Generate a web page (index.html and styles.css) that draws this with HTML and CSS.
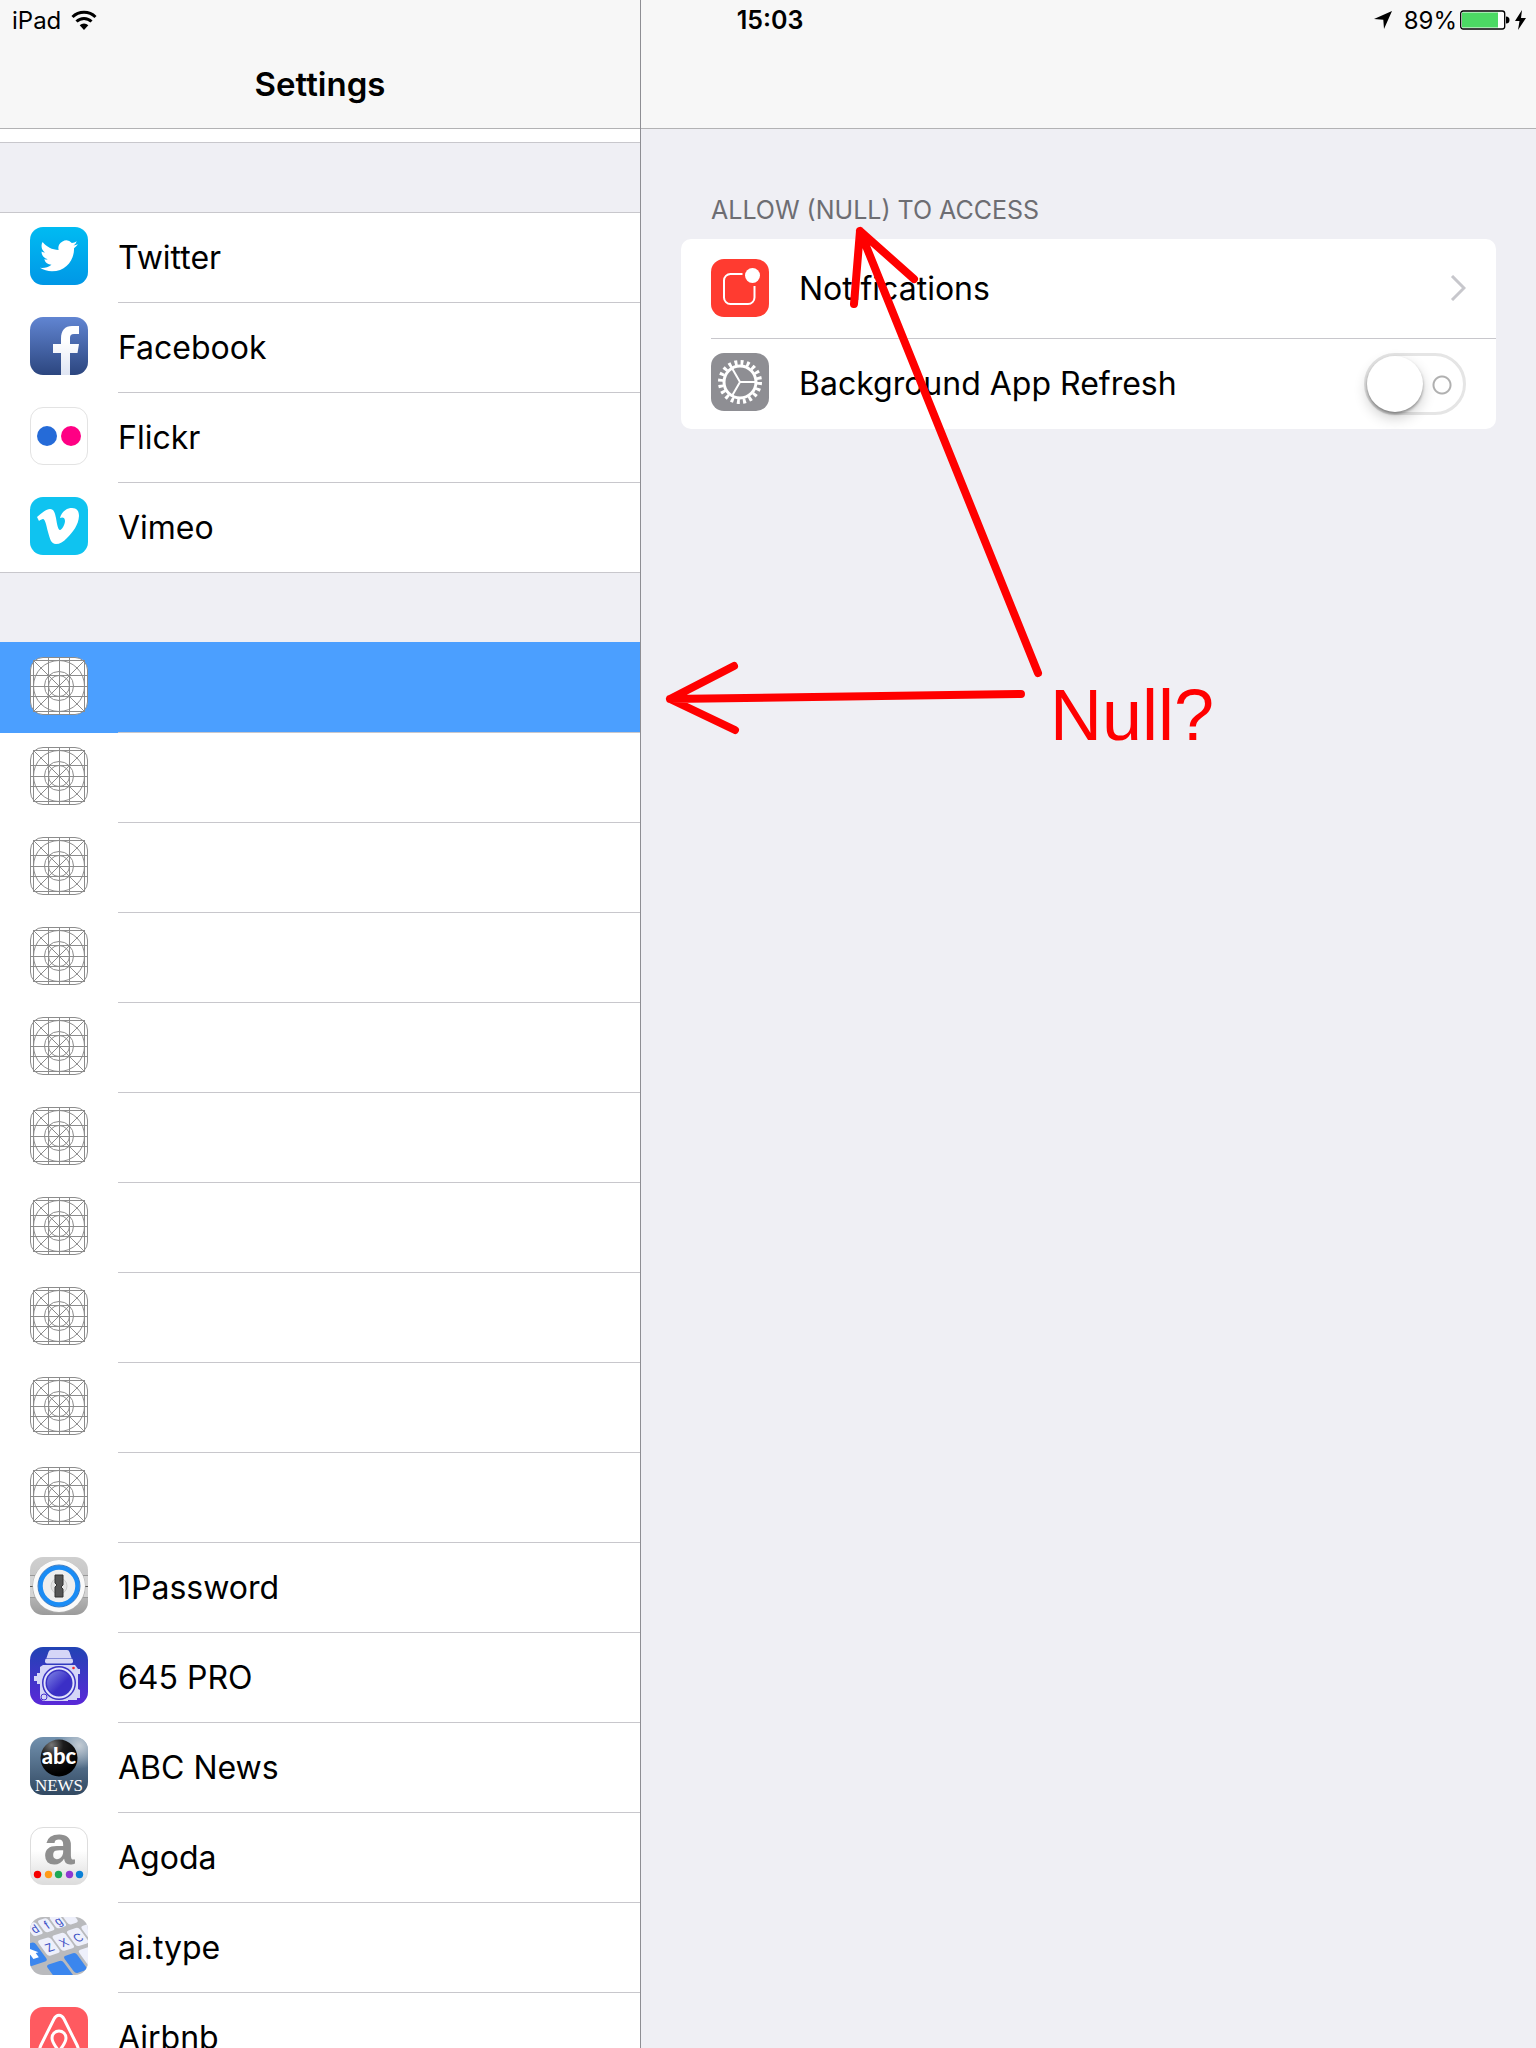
FILE: index.html
```html
<!DOCTYPE html>
<html lang="en">

<head>
    <meta charset="utf-8">
    <title>Settings</title>
    <link rel="stylesheet" href="styles.css">
</head>

<body>
    <!-- shared drawing: the blank app icon grid -->
    <svg class="defs" width="0" height="0">
        <symbol id="blank" viewBox="0 0 58 58">
            <rect x="0.5" y="0.5" width="57" height="57" rx="12.5" fill="#fff" stroke="#8c8c8c" />
            <g fill="none" stroke="#8c8c8c">
                <path d="M3.5 3v52M18.500 1v56M29.500 1v56M39.500 1v56M54.500 3v52" />
                <path d="M3 3.500h52M1 18.500h56M1 29.500h56M1 39.500h56M3 54.500h52" />
                <path d="M4 4l50 50M54 4L4 54" />
                <circle cx="29" cy="29" r="25.500" />
                <circle cx="29" cy="29" r="14.500" />
                <circle cx="29" cy="29" r="10.500" />
            </g>
        </symbol>
    </svg>

    <div class="statusbar">
        <div class="carrier">
            <span>iPad</span>
            <svg width="26" height="22" viewBox="0 0 26 22">
                <path d="M1.500 8a16.500 16.500 0 0 1 23 0" fill="none" stroke="#000" stroke-width="3" />
                <path d="M5.500 12.500a10.700 10.700 0 0 1 15 0" fill="none" stroke="#000" stroke-width="3" />
                <path d="M8.700 16.200a6.200 6.200 0 0 1 8.600 0L13 21z" />
            </svg>
        </div>
        <div class="time">15:03</div>
        <div class="power">
            <svg class="location" width="18" height="18" viewBox="0 0 18 18">
                <path d="M18 0L10 18 9.300 8.700 0 8z" />
            </svg>
            <span>89%</span>
            <svg width="66" height="20" viewBox="0 0 66 20">
                <rect x="0.700" y="1" width="44" height="18" rx="2.500" fill="#fff" stroke="#000" stroke-width="1.300" />
                <rect x="2" y="2.500" width="36" height="15" fill="#4cd964" />
                <path d="M46 6.500a3.500 3.500 0 0 1 0 7z" />
                <path d="M62 0L55 11h4.500L58 20l8-12h-5z" />
            </svg>
        </div>
    </div>

    <div class="page">
        <div class="sidebar">
            <div class="navbar">
                <h1>Settings</h1>
            </div>
            <div class="list scrolled"></div>

            <ul class="list">
                <li>
                    <svg class="icon" viewBox="0 0 58 58">
                        <defs>
                            <linearGradient id="tw" x2="0" y2="1">
                                <stop offset="0" stop-color="#00bbf2" />
                                <stop offset="1" stop-color="#0097e6" />
                            </linearGradient>
                        </defs>
                        <rect width="58" height="58" rx="13" fill="url(#tw)" />
                        <path transform="translate(10 10) scale(1.58)" fill="#fff" d="M23.950 4.570a10 10 0 0 1-2.820.77 4.960 4.960 0 0 0 2.160-2.720c-.95.55-2 .96-3.130 1.180a4.920 4.920 0 0 0-8.380 4.480C7.690 8.100 4.070 6.130 1.640 3.160a4.820 4.820 0 0 0-.67 2.480c0 1.710.87 3.210 2.190 4.100a4.900 4.900 0 0 1-2.230-.62v.06a4.920 4.920 0 0 0 3.950 4.830 5 5 0 0 1-2.210.08 4.940 4.940 0 0 0 4.600 3.420A9.870 9.870 0 0 1 0 19.540a13.990 13.990 0 0 0 7.560 2.210c9.050 0 13.990-7.500 13.990-13.980 0-.21 0-.42-.02-.63a9.940 9.940 0 0 0 2.460-2.550z" />
                    </svg>
                    <span>Twitter</span>
                </li>
                <li>
                    <svg class="icon" viewBox="0 0 58 58">
                        <defs>
                            <linearGradient id="fb" x2="0" y2="1">
                                <stop offset="0" stop-color="#6185d2" />
                                <stop offset="1" stop-color="#2c467f" />
                            </linearGradient>
                            <linearGradient id="fbf" x2="0" y2="1">
                                <stop offset="0.300" stop-color="#fff" />
                                <stop offset="1" stop-color="#dfe5f3" />
                            </linearGradient>
                        </defs>
                        <rect width="58" height="58" rx="13" fill="url(#fb)" />
                        <path d="M31 58V36h-8v-9h8v-5c0-9 4-13 11-13h7v8h-5c-3 0-4 1.500-4 4v6h9l-1.500 9H40v22z" fill="url(#fbf)" />
                    </svg>
                    <span>Facebook</span>
                </li>
                <li>
                    <svg class="icon" viewBox="0 0 58 58">
                        <rect x="0.500" y="0.500" width="57" height="57" rx="12.500" fill="#fff" stroke="#e3e3e3" />
                        <circle cx="17" cy="29" r="10" fill="#256bd8" />
                        <circle cx="41" cy="29" r="10" fill="#ff0084" />
                    </svg>
                    <span>Flickr</span>
                </li>
                <li>
                    <svg class="icon" viewBox="0 0 58 58">
                        <rect width="58" height="58" rx="13" fill="#0fc3f0" />
                        <path d="M7 20c5-4 9-8 13-8 4 0 5 4 6 9 1 6 2 12 4 12s5-6 5-9c0-4-3-4-5-3 2-7 7-10 12-10 5 0 7 3 7 8-.5 9-6 16-12 22-4 4-7 6-11 6-5 0-6-5-8-12-2-8-3-13-5-13-1 0-3 1-4 2z" fill="#fff" />
                    </svg>
                    <span>Vimeo</span>
                </li>
            </ul>

            <ul class="list">
                <li class="selected"><svg class="icon"><use href="#blank" /></svg></li>
                <li><svg class="icon"><use href="#blank" /></svg></li>
                <li><svg class="icon"><use href="#blank" /></svg></li>
                <li><svg class="icon"><use href="#blank" /></svg></li>
                <li><svg class="icon"><use href="#blank" /></svg></li>
                <li><svg class="icon"><use href="#blank" /></svg></li>
                <li><svg class="icon"><use href="#blank" /></svg></li>
                <li><svg class="icon"><use href="#blank" /></svg></li>
                <li><svg class="icon"><use href="#blank" /></svg></li>
                <li><svg class="icon"><use href="#blank" /></svg></li>
                <li>
                    <svg class="icon" viewBox="0 0 58 58">
                        <defs>
                            <linearGradient id="op" x2="0" y2="1">
                                <stop offset="0" stop-color="#cfcfcf" />
                                <stop offset="0.500" stop-color="#c4c4c4" />
                                <stop offset="1" stop-color="#9b9b9b" />
                            </linearGradient>
                        </defs>
                        <rect width="58" height="58" rx="13" fill="url(#op)" />
                        <rect y="18" width="58" height="23" fill="#d4d4d4" />
                        <path d="M0 18.500h58M0 40.500h58" stroke="#999" />
                        <path d="M0 29.500h58" stroke="#555" />
                        <circle cx="29" cy="29.500" r="26.500" fill="#aaa" />
                        <circle cx="29" cy="29" r="26" fill="#fafafa" />
                        <circle cx="29" cy="29" r="18.500" fill="#eee" stroke="#1a8cf5" stroke-width="4.500" />
                        <circle cx="29" cy="29" r="21" fill="none" stroke="#1560b4" stroke-width="0.800" />
                        <circle cx="29" cy="29" r="8" fill="#e4e4e4" stroke="#ccc" />
                        <path d="M25 18h8v10l-2 2 2 2v8h-8V30l2-2-2-2z" fill="#555" stroke="#333" />
                    </svg>
                    <span>1Password</span>
                </li>
                <li>
                    <svg class="icon" viewBox="0 0 58 58">
                        <defs>
                            <linearGradient id="pro" x2="0" y2="1">
                                <stop offset="0" stop-color="#2143b4" />
                                <stop offset="1" stop-color="#5a28d8" />
                            </linearGradient>
                            <linearGradient id="lens" x2="1" y2="1">
                                <stop offset="0.100" stop-color="#7477e0" />
                                <stop offset="0.600" stop-color="#3b2fc6" />
                            </linearGradient>
                        </defs>
                        <rect width="58" height="58" rx="13" fill="url(#pro)" />
                        <g fill="#d5d6f7">
                            <path d="M21 3h16q2 0 2.500 2l2 6h-25l2-6q.5-2 2.500-2z" />
                            <rect x="15" y="11.500" width="28" height="5" rx="2" />
                            <path d="M13 18h32l3 4h2v5h-2v15l2 1v8h-3v2H38v1H13l-3-3V37H7v-3H4v-5h3v-3h3v-6z" />
                        </g>
                        <circle cx="29" cy="36" r="17" fill="#3a32c3" />
                        <circle cx="29" cy="36" r="14.500" fill="#3a32c3" stroke="#e1e2fb" stroke-width="2" />
                        <circle cx="29" cy="36" r="12" fill="url(#lens)" />
                        <circle cx="14" cy="50" r="3" fill="none" stroke="#4a33cd" />
                        <circle cx="43.500" cy="21" r="1.300" fill="#f02828" />
                    </svg>
                    <span>645 PRO</span>
                </li>
                <li>
                    <svg class="icon" viewBox="0 0 58 58">
                        <defs>
                            <linearGradient id="abc" x2="0" y2="1">
                                <stop offset="0" stop-color="#7291ae" />
                                <stop offset="1" stop-color="#314861" />
                            </linearGradient>
                            <radialGradient id="glow" cx="0.850" cy="0.150" r="0.400">
                                <stop offset="0" stop-color="#c4ccd4" />
                                <stop offset="1" stop-color="#c4ccd4" stop-opacity="0" />
                            </radialGradient>
                            <radialGradient id="ball" cx="0.300" cy="0.150" r="0.800">
                                <stop offset="0" stop-color="#777" />
                                <stop offset="0.400" stop-color="#1c1c1c" />
                                <stop offset="1" stop-color="#000" />
                            </radialGradient>
                        </defs>
                        <rect width="58" height="58" rx="13" fill="url(#abc)" />
                        <rect width="58" height="58" rx="13" fill="url(#glow)" />
                        <circle cx="29" cy="21" r="18.500" fill="url(#ball)" />
                        <text class="abc" x="29" y="27" text-anchor="middle">abc</text>
                        <text class="news" x="29" y="54" text-anchor="middle">NEWS</text>
                    </svg>
                    <span>ABC News</span>
                </li>
                <li>
                    <svg class="icon" viewBox="0 0 58 58">
                        <defs>
                            <linearGradient id="ag" x2="0" y2="1">
                                <stop offset="0.400" stop-color="#fff" />
                                <stop offset="1" stop-color="#dcdcdc" />
                            </linearGradient>
                        </defs>
                        <rect x="0.500" y="0.500" width="57" height="57" rx="12.500" fill="url(#ag)" stroke="#ddd" />
                        <text class="agoda" x="29" y="37" text-anchor="middle">a</text>
                        <circle cx="7.500" cy="47.500" r="3.700" fill="#f50000" />
                        <circle cx="18.500" cy="47.500" r="3.700" fill="#ff9b17" />
                        <circle cx="28.500" cy="47.500" r="3.700" fill="#1ba956" />
                        <circle cx="39.500" cy="47.500" r="3.700" fill="#8f38d2" />
                        <circle cx="49.500" cy="47.500" r="3.700" fill="#0a80d6" />
                    </svg>
                    <span>Agoda</span>
                </li>
                <li>
                    <svg class="icon" viewBox="0 0 58 58">
                        <defs>
                            <clipPath id="round">
                                <rect width="58" height="58" rx="13" />
                            </clipPath>
                        </defs>
                        <g clip-path="url(#round)">
                            <rect width="58" height="58" fill="#b9babd" />
                            <g transform="matrix(0.900 -0.300 0.620 0.850 7 24)">
                                <g fill="#eef0fb">
                                    <rect x="-14" y="-19" width="11" height="14" rx="3" />
                                    <rect x="0" y="-19" width="11" height="14" rx="3" />
                                    <rect x="13" y="-19" width="11" height="14" rx="3" />
                                    <rect x="26" y="-19" width="11" height="14" rx="3" />
                                    <rect x="39" y="-19" width="11" height="14" rx="3" />
                                    <rect x="0" y="0" width="14" height="18" rx="3" />
                                    <rect x="16" y="0" width="14" height="18" rx="3" />
                                    <rect x="32" y="0" width="14" height="18" rx="3" />
                                    <rect x="48" y="0" width="14" height="18" rx="3" />
                                    <rect x="30" y="22" width="20" height="20" rx="3" />
                                </g>
                                <g fill="#3b86ee">
                                    <rect x="-24" y="0" width="21" height="22" rx="3" />
                                    <rect x="-8" y="26" width="18" height="20" rx="3" />
                                    <rect x="13" y="23" width="14" height="20" rx="3" />
                                </g>
                                <path d="M-18 11l6-6 6 6h-3v5h-6v-5z" fill="#fff" />
                            </g>
                        </g>
                        <g class="keys" transform="matrix(0.900 -0.300 0.620 0.850 7 24)">
                            <text x="6" y="-8" text-anchor="middle">d</text>
                            <text x="19" y="-8" text-anchor="middle">f</text>
                            <text x="32" y="-8" text-anchor="middle">g</text>
                            <text x="7" y="14" text-anchor="middle">Z</text>
                            <text x="23" y="14" text-anchor="middle">X</text>
                            <text x="39" y="14" text-anchor="middle">C</text>
                        </g>
                    </svg>
                    <span>ai.type</span>
                </li>
                <li>
                    <svg class="icon" viewBox="0 0 58 58">
                        <rect width="58" height="58" rx="13" fill="#ff5a60" />
                        <path d="M29 44c-5-6-7-9-7-13a7 7 0 0 1 14 0c0 4-2 7-7 13zm0 0c-6 7-12 8-16 5-4-3-4-7-2-11L24 12c2.500-5 7.500-5 10 0l13 26c2 4 2 8-2 11-4 3-10 2-16-5z" fill="none" stroke="#fff" stroke-width="3" />
                    </svg>
                    <span>Airbnb</span>
                </li>
            </ul>
        </div>

        <div class="detail">
            <div class="navbar"></div>
            <div class="content">
                <h2>ALLOW (NULL) TO ACCESS</h2>
                <div class="card">
                    <a class="row tall" href="#">
                        <svg class="icon" viewBox="0 0 58 58">
                            <rect width="58" height="58" rx="13" fill="#ff3b30" />
                            <path d="M31.500 15H19.500a6.500 6.500 0 0 0-6.500 6.500v17a6.500 6.500 0 0 0 6.500 6.500h17.500a6.500 6.500 0 0 0 6.500-6.500V27" fill="none" stroke="#fff" stroke-width="2" />
                            <circle cx="41.500" cy="16.500" r="7.500" fill="#fff" />
                        </svg>
                        <span>Notifications</span>
                        <svg class="chevron" width="16" height="26" viewBox="0 0 16 26">
                            <path d="M2 1l12 12L2 25" fill="none" stroke="#c7c7cc" stroke-width="3" />
                        </svg>
                    </a>
                    <div class="row">
                        <svg class="icon" viewBox="0 0 58 58">
                            <rect width="58" height="58" rx="13" fill="#8e8e93" />
                            <circle cx="29" cy="29" r="19.500" fill="none" stroke="#fff" stroke-width="5" stroke-dasharray="2.900 3.226" />
                            <circle cx="29" cy="29" r="16" fill="none" stroke="#fff" stroke-width="3" />
                            <path d="M29 29h15M29 29l-7.500-13M29 29l-7.500 13" stroke="#fff" stroke-width="2" />
                        </svg>
                        <label for="refresh">Background App Refresh</label>
                        <input type="checkbox" id="refresh" class="switch">
                    </div>
                </div>
            </div>

            <!-- red marks drawn over the pane -->
            <svg class="marks" width="620" height="800" viewBox="0 0 620 800">
                <g fill="none" stroke="#f00" stroke-width="8" stroke-linecap="round" stroke-linejoin="round">
                    <path d="M397 673L219 231M213 304l6-73 54 48" />
                    <path d="M380 694L29 699M93 666L29 699l65 31" />
                </g>
                <text x="409" y="740">Null?</text>
            </svg>
        </div>
    </div>
</body>

</html>
```

FILE: styles.css
```css
* {
    box-sizing: border-box;
}

body {
    margin: 0;
    font-family: Inter, "Liberation Sans", sans-serif;
    font-size: 32px;
    color: #000;
    background-color: #efeff4;
}

h1,
h2,
ul {
    margin: 0;
    padding: 0;
}

.defs {
    position: absolute;
}

/* status bar lies over both nav bars */
.statusbar {
    position: absolute;
    top: 0;
    left: 0;
    right: 0;
    z-index: 2;
    height: 40px;
    padding: 0 10px 0 12px;
    display: grid;
    grid-template-columns: 1fr auto 1fr;
    align-items: center;
    font-size: 24px;
}

.carrier,
.power {
    display: flex;
    align-items: center;
    gap: 10px;
}

.power {
    justify-content: flex-end;
    gap: 3px;
}

.location {
    margin-right: 9px;
}

.time {
    padding-left: 2px;
    font-size: 25px;
    font-weight: 600;
}

.page {
    display: grid;
    grid-template-columns: 5fr 7fr;
    height: 100vh;
    overflow: hidden;
}

.navbar {
    height: 129px;
    padding-top: 40px;
    display: flex;
    align-items: center;
    justify-content: center;
    background-color: #f7f7f7;
    border-bottom: 1px solid #b2b2b4;
}

h1 {
    font-size: 33px;
    font-weight: 600;
}

.sidebar {
    overflow: hidden;
}

.list {
    margin-bottom: 69px;
    list-style: none;
    background-color: #fff;
    border-top: 1px solid #c8c7cc;
}

.scrolled {
    height: 14px;
    border-top: none;
    border-bottom: 1px solid #c8c7cc;
}

.list li {
    height: 90px;
    padding: 0 0 4px 30px;
    display: flex;
    align-items: center;
    gap: 30px;
    background: linear-gradient(#c8c7cc, #c8c7cc) 118px 100% / 100% 1px no-repeat;
}

.list:not(:last-child) li:last-child {
    background-position: 0 100%;
}

.list .selected {
    background-color: #4b9fff;
    box-shadow: 0 -1px #4b9fff;
}

.list span,
.row span,
.row label {
    padding-top: 2px;
}

.icon {
    width: 58px;
    height: 58px;
    flex: none;
    overflow: visible;
}

.abc {
    font: 900 22px Lato, sans-serif;
    fill: #fff;
}

.news {
    font: 17px "Liberation Serif", serif;
    fill: #fff;
}

.agoda {
    font: bold 56px "Liberation Sans", sans-serif;
    fill: #8f8f8f;
}

.keys {
    font: 12px "Liberation Sans", sans-serif;
    fill: #3b4fc4;
}

.detail {
    position: relative;
    border-left: 1px solid #8e8e93;
}

.content {
    padding: 64px 40px 0;
}

h2 {
    padding-left: 30px;
    font-size: 25px;
    line-height: 34px;
    font-weight: 400;
    color: #6d6d72;
}

.card {
    margin-top: 12px;
    background-color: #fff;
    border-radius: 10px;
}

.row {
    height: 90px;
    margin-left: 30px;
    padding: 0 30px 4px 0;
    display: flex;
    align-items: center;
    gap: 30px;
    color: #000;
    text-decoration: none;
}

.tall {
    height: 100px;
    padding-bottom: 2px;
    border-bottom: 1px solid #c8c7cc;
}

.chevron {
    margin-left: auto;
}

.switch {
    appearance: none;
    width: 102px;
    height: 62px;
    margin: 4px 0 0 auto;
    border: 3px solid #e5e5e5;
    border-radius: 31px;
    background: radial-gradient(circle at 75px 29px, #fff 7px, #b0b0b0 8px, #b0b0b0 9px, #fff 10px);
}

.switch::before {
    content: "";
    display: block;
    width: 56px;
    height: 56px;
    border-radius: 50%;
    background-color: #fff;
    box-shadow: 0 6px 14px rgba(0, 0, 0, 0.2), 0 2px 3px rgba(0, 0, 0, 0.35);
}

.switch:checked {
    background: #4cd964;
}

.switch:checked::before {
    margin-left: auto;
}

.marks {
    position: absolute;
    top: 0;
    left: 0;
}

.marks text {
    font: 72px "Liberation Sans", sans-serif;
    fill: #f00;
}
```
